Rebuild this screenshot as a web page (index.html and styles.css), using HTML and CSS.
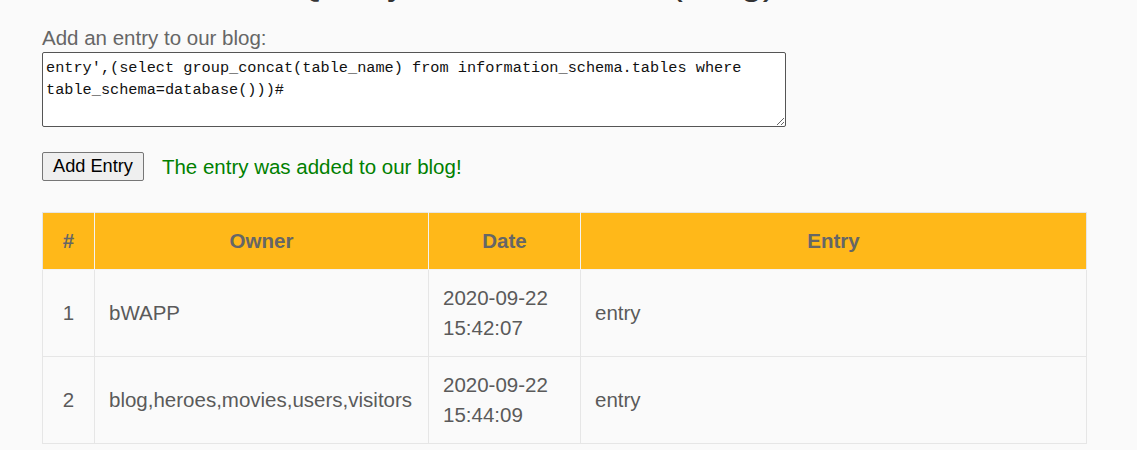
FILE: index.html
```html
<!DOCTYPE html>
<html lang="en">
<head>
<meta charset="utf-8">
<title>bWAPP - SQL Injection - Stored (Blog)</title>
<link rel="stylesheet" href="styles.css">
</head>
<body>
<div class="page">
  <h1 class="title">/ SQL Injection - Stored (Blog) /</h1>
  <form class="blog-form">
    <p class="label">Add an entry to our blog:</p>
    <textarea class="entry-box">entry',(select group_concat(table_name) from information_schema.tables where table_schema=database()))#</textarea>
    <div class="actions">
      <button type="button" class="btn">Add Entry</button>
      <span class="msg">The entry was added to our blog!</span>
    </div>
  </form>
  <table class="blog-table">
    <thead>
      <tr>
        <th class="c-num">#</th>
        <th class="c-owner">Owner</th>
        <th class="c-date">Date</th>
        <th class="c-entry">Entry</th>
      </tr>
    </thead>
    <tbody>
      <tr>
        <td class="num">1</td>
        <td>bWAPP</td>
        <td>2020-09-22 15:42:07</td>
        <td>entry</td>
      </tr>
      <tr>
        <td class="num">2</td>
        <td>blog,heroes,movies,users,visitors</td>
        <td>2020-09-22 15:44:09</td>
        <td>entry</td>
      </tr>
    </tbody>
  </table>
</div>
</body>
</html>
```

FILE: styles.css
```css
html, body {
  margin: 0;
  padding: 0;
  background: #fafafa;
}

body {
  font-family: "Liberation Sans", Arial, sans-serif;
  color: #666;
  overflow: hidden;
}

.page {
  padding: 0 0 0 42px;
}

.title {
  margin: -40px 0 0 202px;
  font-size: 40px;
  line-height: 40px;
  font-weight: normal;
  color: #333;
  white-space: nowrap;
}

.blog-form {
  margin: 26px 0 0 0;
}

.label {
  margin: 0;
  font-size: 20.5px;
  line-height: 24px;
  color: #666;
}

.entry-box {
  display: block;
  box-sizing: border-box;
  width: 744px;
  height: 75px;
  margin: 2px 0 0 0;
  padding: 4px 3px;
  border: 1px solid #555;
  border-radius: 2px;
  background: #fff;
  font-family: "Liberation Mono", "Courier New", monospace;
  font-size: 15.25px;
  line-height: 22px;
  color: #111;
  resize: both;
}

.actions {
  display: flex;
  align-items: center;
  gap: 18px;
  margin-top: 25px;
}

.btn {
  box-sizing: border-box;
  height: 29px;
  padding: 0 10px;
  border: 1px solid #767676;
  border-radius: 2px;
  background: #efefef;
  font-family: "Liberation Sans", Arial, sans-serif;
  font-size: 18.2px;
  color: #000;
}

.msg {
  font-size: 20.5px;
  color: #008000;
}

.blog-table {
  margin-top: 31px;
  width: 1045px;
  border-collapse: collapse;
  font-size: 20.5px;
  line-height: 30px;
}

.blog-table th,
.blog-table td {
  padding: 13px 14px;
  border: 1px solid #e6e6e6;
}

.blog-table th {
  background: #ffb819;
  color: #666;
  font-weight: bold;
  text-align: center;
  border-color: #f3f3f3;
  border-top-color: #e6e6e6;
}

.blog-table th:first-child {
  border-left-color: #e6e6e6;
}

.blog-table th:last-child {
  border-right-color: #e6e6e6;
}

.blog-table td {
  color: #5a5a5a;
  text-align: left;
}

.blog-table td.num {
  text-align: center;
}

.c-num { width: 52px; }
.c-owner { width: 334px; }
.c-date { width: 152px; }
.c-entry { width: auto; }

.blog-table th.c-num,
.blog-table th.c-owner,
.blog-table th.c-date {
  box-sizing: border-box;
}
```
